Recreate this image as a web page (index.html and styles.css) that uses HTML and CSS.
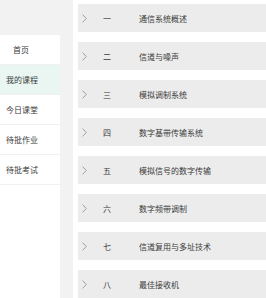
FILE: index.html
```html
<!DOCTYPE html>
<html lang="zh">
<head>
<meta charset="utf-8">
<link rel="stylesheet" href="styles.css">
</head>
<body>
<div class="page">
  <nav class="sidebar">
    <div class="nav-item home">首页</div>
    <div class="nav-item active">我的课程</div>
    <div class="nav-item">今日课堂</div>
    <div class="nav-item">待批作业</div>
    <div class="nav-item">待批考试</div>
  </nav>
  <main class="content">
    <div class="card"><svg class="chev" viewBox="0 0 5 9"><path d="M0.6 0.6 L4.3 4.5 L0.6 8.4" /></svg><span class="num">一</span><span class="title">通信系统概述</span></div>
    <div class="card"><svg class="chev" viewBox="0 0 5 9"><path d="M0.6 0.6 L4.3 4.5 L0.6 8.4" /></svg><span class="num">二</span><span class="title">信道与噪声</span></div>
    <div class="card"><svg class="chev" viewBox="0 0 5 9"><path d="M0.6 0.6 L4.3 4.5 L0.6 8.4" /></svg><span class="num">三</span><span class="title">模拟调制系统</span></div>
    <div class="card"><svg class="chev" viewBox="0 0 5 9"><path d="M0.6 0.6 L4.3 4.5 L0.6 8.4" /></svg><span class="num">四</span><span class="title">数字基带传输系统</span></div>
    <div class="card"><svg class="chev" viewBox="0 0 5 9"><path d="M0.6 0.6 L4.3 4.5 L0.6 8.4" /></svg><span class="num">五</span><span class="title">模拟信号的数字传输</span></div>
    <div class="card"><svg class="chev" viewBox="0 0 5 9"><path d="M0.6 0.6 L4.3 4.5 L0.6 8.4" /></svg><span class="num">六</span><span class="title">数字频带调制</span></div>
    <div class="card"><svg class="chev" viewBox="0 0 5 9"><path d="M0.6 0.6 L4.3 4.5 L0.6 8.4" /></svg><span class="num">七</span><span class="title">信道复用与多址技术</span></div>
    <div class="card"><svg class="chev" viewBox="0 0 5 9"><path d="M0.6 0.6 L4.3 4.5 L0.6 8.4" /></svg><span class="num">八</span><span class="title">最佳接收机</span></div>
  </main>
</div>
</body>
</html>
```
FILE: styles.css
```css
html, body {
  margin: 0;
  padding: 0;
  background: #f2f2f2;
  overflow: hidden;
}
.page {
  display: flex;
  height: 298px;
  font-family: "Noto Sans CJK SC", "Noto Sans", sans-serif;
  font-size: 8px;
  color: #3a3a3a;
}
.sidebar {
  width: 60px;
  margin-top: 35px;
  background: #fff;
  display: flex;
  flex-direction: column;
}
.nav-item {
  height: 29px;
  border-bottom: 1px solid #f0f0f0;
  display: flex;
  align-items: center;
  padding-left: 6px;
  white-space: nowrap;
}
.nav-item.home {
  padding-left: 13px;
}
.nav-item.active {
  background: #e9f6f2;
}
.content {
  flex: 1;
  margin-left: 13px;
  background: #fff;
  padding: 4px 0 0 5px;
  overflow: hidden;
}
.card {
  height: 28px;
  margin-bottom: 10px;
  background: #ececec;
  display: flex;
  align-items: center;
  padding-left: 4px;
  white-space: nowrap;
}
.chev {
  width: 5px;
  height: 9px;
  fill: none;
  stroke: #a0a0a0;
  stroke-width: 1;
}
.num {
  margin-left: 16px;
  width: 36px;
}
.title {
  color: #3a3a3a;
}
```
